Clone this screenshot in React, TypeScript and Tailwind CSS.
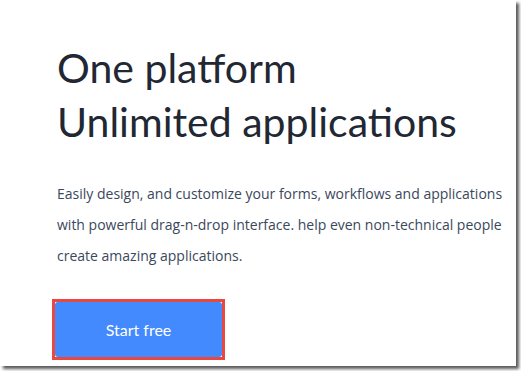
import React from "react";

export default function App() {
  return (
    <div className="w-[521px] h-[371px] bg-white overflow-hidden">
      <div className="w-[516px] h-[366px] bg-white shadow-[3px_3px_3px_0_rgba(0,0,0,0.65)] flex flex-col pl-[57px] pt-[41px]">
        <h1
          className="text-[41px] leading-[54px] text-[#212733] font-normal"
          style={{ fontFamily: "Lato, 'Open Sans', sans-serif" }}
        >
          One platform
          <br />
          Unlimited applications
        </h1>
        <p
          className="mt-[29px] text-[14px] leading-[31px] text-[#3a485c] w-[460px]"
          style={{ fontFamily: "'Open Sans', Lato, sans-serif" }}
        >
          Easily design, and customize your forms, workflows and applications
          <br />
          with powerful drag-n-drop interface. help even non-technical people
          <br />
          create amazing applications.
        </p>
        <div className="mt-[28px] -ml-[5px] w-[173px] h-[61px] border-[3px] border-[#e8483f] bg-white">
          <button
            className="w-full h-full rounded-[3px] bg-[#448aff] text-white text-[16px] flex items-center justify-center"
            style={{ fontFamily: "Lato, 'Open Sans', sans-serif" }}
          >
            Start free
          </button>
        </div>
      </div>
    </div>
  );
}
